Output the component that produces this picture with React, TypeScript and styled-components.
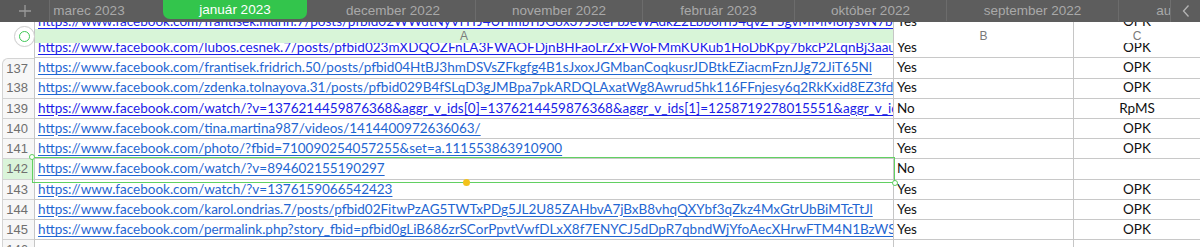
import React from "react";
import styled, { createGlobalStyle } from "styled-components";

const GlobalStyle = createGlobalStyle`
  html, body { margin: 0; padding: 0; background: #ffffff; }
  body { width: 1200px; height: 247px; overflow: hidden; }
`;

const Frame = styled.div`
  width: 1200px;
  height: 247px;
  overflow: hidden;
  display: flex;
  flex-direction: column;
  background: #ffffff;
`;

/* ---------- Tab bar ---------- */
const TabBar = styled.div`
  height: 22px;
  flex: none;
  display: flex;
  background: #5d5d5d;
  font-family: "Liberation Sans", Arial, sans-serif;
`;

const PlusButton = styled.div`
  width: 50px;
  flex: none;
  display: flex;
  align-items: center;
  justify-content: center;
  background: #595959;
  box-sizing: border-box;
  border-right: 1px solid #6b6b6b;
`;

const TabStrip = styled.div`
  flex: 1;
  overflow: hidden;
  display: flex;
`;

const TabTrack = styled.div`
  display: flex;
  flex: none;
  margin-left: -33px; /* scrolled strip */
`;

const Tab = styled.div<{ $w: number; $sep: boolean }>`
  width: ${(p) => p.$w}px;
  flex: none;
  box-sizing: border-box;
  display: flex;
  align-items: center;
  justify-content: center;
  height: 21px;
  font-size: 13.5px;
  color: #a9a9a9;
  white-space: nowrap;
  overflow: hidden;
  border-left: 1px solid ${(p) => (p.$sep ? "#6c6c6c" : "transparent")};
`;

const ActiveSlot = styled.div<{ $w: number }>`
  width: ${(p) => p.$w}px;
  flex: none;
  box-sizing: border-box;
  padding: 0 3px;
  height: 22px;
`;

const ActivePill = styled.div`
  height: 19px;
  background: #33c54c;
  border-radius: 0 0 7px 7px;
  display: flex;
  align-items: center;
  justify-content: center;
  color: #ffffff;
  font-size: 13.5px;
  white-space: nowrap;
`;

const ArrowButton = styled.div`
  width: 30px;
  flex: none;
  box-sizing: border-box;
  border-left: 1px solid #6f6f6f;
  display: flex;
  align-items: center;
  justify-content: center;
  background: #5d5d5d;
`;

/* ---------- Sheet ---------- */
const Sheet = styled.div`
  position: relative;
  flex: 1;
  overflow: hidden;
  display: flex;
  flex-direction: column;
  font-family: Lato, "Open Sans", sans-serif;
`;

const Peek = styled.div<{ $h: number; $shift: number }>`
  height: ${(p) => p.$h}px;
  flex: none;
  overflow: hidden;
  & > div {
    margin-top: ${(p) => p.$shift}px;
  }
`;

const RowGrid = styled.div`
  position: relative;
  display: grid;
  grid-template-columns: 34px 859px 180px 1fr;
  height: 20.25px;
  flex: none;
`;

const RowHeadBlank = styled.div`
  background: #ffffff;
`;

const RowNum = styled.div<{ $first?: boolean; $sel?: boolean }>`
  margin-left: 2px;
  box-sizing: border-box;
  border-left: 1px solid #d4d4d4;
  border-bottom: 1px solid #d2d2d2;
  border-top: ${(p) => (p.$first ? "1px solid #d4d4d4" : "none")};
  border-top-left-radius: ${(p) => (p.$first ? "6px" : "0")};
  background: ${(p) => (p.$sel ? "#daf4da" : "#f7f7f7")};
  color: #6f6f6f;
  font-family: "Liberation Sans", Arial, sans-serif;
  font-size: 13px;
  text-align: right;
  padding-right: 6px;
  line-height: 19px;
`;

const Cell = styled.div<{ $center?: boolean }>`
  box-sizing: border-box;
  border-left: 1px solid #c6c6c6;
  border-bottom: 1px solid #c8c8c8;
  padding: 0 3px;
  overflow: hidden;
  white-space: nowrap;
  font-size: 13.5px;
  line-height: 19px;
  color: #111111;
  text-align: ${(p) => (p.$center ? "center" : "left")};
`;

const Link = styled.span<{ $deep?: boolean }>`
  color: ${(p) => (p.$deep ? "#1a1ee6" : "#1f66d2")};
  text-decoration: underline;
  text-underline-offset: 2px;
`;

const HeaderRow = styled.div`
  display: grid;
  grid-template-columns: 34px 859px 180px 1fr;
  height: 14px;
  flex: none;
  font-family: "Liberation Sans", Arial, sans-serif;
  font-size: 12px;
  color: #7a7a7a;
`;

const HeadCell = styled.div<{ $sel?: boolean }>`
  box-sizing: border-box;
  border-left: 1px solid #c6c6c6;
  background: ${(p) => (p.$sel ? "#d8f5d8" : "#ffffff")};
  text-align: center;
  line-height: 14px;
`;

const SelectAll = styled.div`
  position: absolute;
  left: 14px;
  top: 4px;
  width: 21px;
  height: 21px;
  box-sizing: border-box;
  border-radius: 50%;
  background: #ffffff;
  border: 1px solid #cfcfcf;
  box-shadow: 0 0 1px rgba(0, 0, 0, 0.08);
  display: flex;
  align-items: center;
  justify-content: center;
  &::after {
    content: "";
    width: 11px;
    height: 11px;
    box-sizing: border-box;
    border-radius: 50%;
    border: 1.5px solid #3fc857;
  }
`;

const Selection = styled.div`
  position: absolute;
  z-index: 3;
  left: 32px;
  width: 863px;
  top: -2px;
  bottom: -3px;
  box-sizing: border-box;
  border: 1.5px solid #62d062;
  pointer-events: none;
`;

const Handle = styled.div<{ $pos: "tl" | "br" }>`
  position: absolute;
  width: 6px;
  height: 6px;
  box-sizing: border-box;
  border-radius: 50%;
  background: #ffffff;
  border: 1.5px solid #5ccf5c;
  ${(p) => (p.$pos === "tl" ? "left: -4px; top: -4px;" : "right: -4px; bottom: -4px;")}
`;

const FillDot = styled.div`
  position: absolute;
  left: 430px;
  bottom: -4.5px;
  width: 7px;
  height: 7px;
  border-radius: 50%;
  background: #f3c21c;
`;

type Row = {
  n: number;
  url: string;
  deep?: boolean;
  b: string;
  c: string;
};

const FB = "https://www.facebook.com/";

const peekTop: Row = {
  n: 135,
  url: FB + "frantisek.murin.7/posts/pfbid02WWdtNyVHTJ4UHmbYfJG8x37JSteFbJeWAdkZ2Lbb6rrrJ4qvZY5gvMMM8IysvN7b6l",
  deep: true,
  b: "Yes",
  c: "OPK",
};

const peekMid: Row = {
  n: 136,
  url: FB + "lubos.cesnek.7/posts/pfbid023mXDQOZFnLA3FWAOFDjnBHFaoLrZxFWoFMmKUKub1HoDbKpy7bkcP2LqnBj3aaugl",
  deep: true,
  b: "Yes",
  c: "OPK",
};

const rows: Row[] = [
  { n: 137, url: FB + "frantisek.fridrich.50/posts/pfbid04HtBJ3hmDSVsZFkgfg4B1sJxoxJGMbanCoqkusrJDBtkEZiacmFznJJg72JiT65Nl", b: "Yes", c: "OPK" },
  { n: 138, url: FB + "zdenka.tolnayova.31/posts/pfbid029B4fSLqD3gJMBpa7pkARDQLAxatWg8Awrud5hk116FFnjesy6q2RkKxid8EZ3fdEl", b: "Yes", c: "OPK" },
  { n: 139, url: FB + "watch/?v=1376214459876368&aggr_v_ids[0]=1376214459876368&aggr_v_ids[1]=1258719278015551&aggr_v_ids[2]=1376214459876368", deep: true, b: "No", c: "RpMS" },
  { n: 140, url: FB + "tina.martina987/videos/1414400972636063/", b: "Yes", c: "OPK" },
  { n: 141, url: FB + "photo/?fbid=710090254057255&set=a.111553863910900", b: "Yes", c: "OPK" },
  { n: 142, url: FB + "watch/?v=894602155190297", b: "No", c: "" },
  { n: 143, url: FB + "watch/?v=1376159066542423", b: "Yes", c: "OPK" },
  { n: 144, url: FB + "karol.ondrias.7/posts/pfbid02FitwPzAG5TWTxPDg5JL2U85ZAHbvA7jBxB8vhqQXYbf3qZkz4MxGtrUbBiMTcTtJl", b: "Yes", c: "OPK" },
  { n: 145, url: FB + "permalink.php?story_fbid=pfbid0gLiB686zrSCorPpvtVwfDLxX8f7ENYCJ5dDpR7qbndWjYfoAecXHrwFTM4N1BzWSl&id=100004", b: "Yes", c: "OPK" },
  { n: 146, url: "", b: "", c: "" },
];

const tabs = [
  { label: "marec 2023", w: 143 },
  { label: "január 2023", w: 150, active: true },
  { label: "december 2022", w: 165 },
  { label: "november 2022", w: 167 },
  { label: "február 2023", w: 152 },
  { label: "október 2022", w: 152 },
  { label: "september 2022", w: 172 },
  { label: "august 2022", w: 150 },
];

const SELECTED = 142;

function DataRow({ r, blankHead, first }: { r: Row; blankHead?: boolean; first?: boolean }) {
  return (
    <RowGrid>
      {blankHead ? (
        <RowHeadBlank />
      ) : (
        <RowNum $first={first} $sel={r.n === SELECTED}>
          {r.n}
        </RowNum>
      )}
      <Cell>{r.url ? <Link $deep={r.deep}>{r.url}</Link> : null}</Cell>
      <Cell>{r.b}</Cell>
      <Cell $center>{r.c}</Cell>
      {r.n === SELECTED && (
        <Selection>
          <Handle $pos="tl" />
          <Handle $pos="br" />
          <FillDot />
        </Selection>
      )}
    </RowGrid>
  );
}

export default function App() {
  return (
    <Frame>
      <GlobalStyle />
      <TabBar>
        <PlusButton>
          <svg width="14" height="14" viewBox="0 0 14 14">
            <path d="M7 1v12M1 7h12" stroke="#9b9b9b" strokeWidth="1.3" />
          </svg>
        </PlusButton>
        <TabStrip>
          <TabTrack>
            {tabs.map((t, i) => {
              if (t.active) {
                return (
                  <ActiveSlot key={t.label} $w={t.w}>
                    <ActivePill>{t.label}</ActivePill>
                  </ActiveSlot>
                );
              }
              const prevActive = i > 0 && tabs[i - 1].active;
              return (
                <Tab key={t.label} $w={t.w} $sep={i > 0 && !prevActive}>
                  {t.label}
                </Tab>
              );
            })}
          </TabTrack>
        </TabStrip>
        <ArrowButton>
          <svg width="10" height="14" viewBox="0 0 10 14">
            <path d="M7.5 1.5L2.5 7l5 5.5" fill="none" stroke="#b5b5b5" strokeWidth="1.3" />
          </svg>
        </ArrowButton>
      </TabBar>
      <Sheet>
        <Peek $h={7} $shift={-10}>
          <DataRow r={peekTop} blankHead />
        </Peek>
        <HeaderRow>
          <div />
          <HeadCell $sel>A</HeadCell>
          <HeadCell>B</HeadCell>
          <HeadCell>C</HeadCell>
        </HeaderRow>
        <Peek $h={15} $shift={-5}>
          <DataRow r={peekMid} blankHead />
        </Peek>
        {rows.map((r, i) => (
          <DataRow key={r.n} r={r} first={i === 0} />
        ))}
        <SelectAll />
      </Sheet>
    </Frame>
  );
}
